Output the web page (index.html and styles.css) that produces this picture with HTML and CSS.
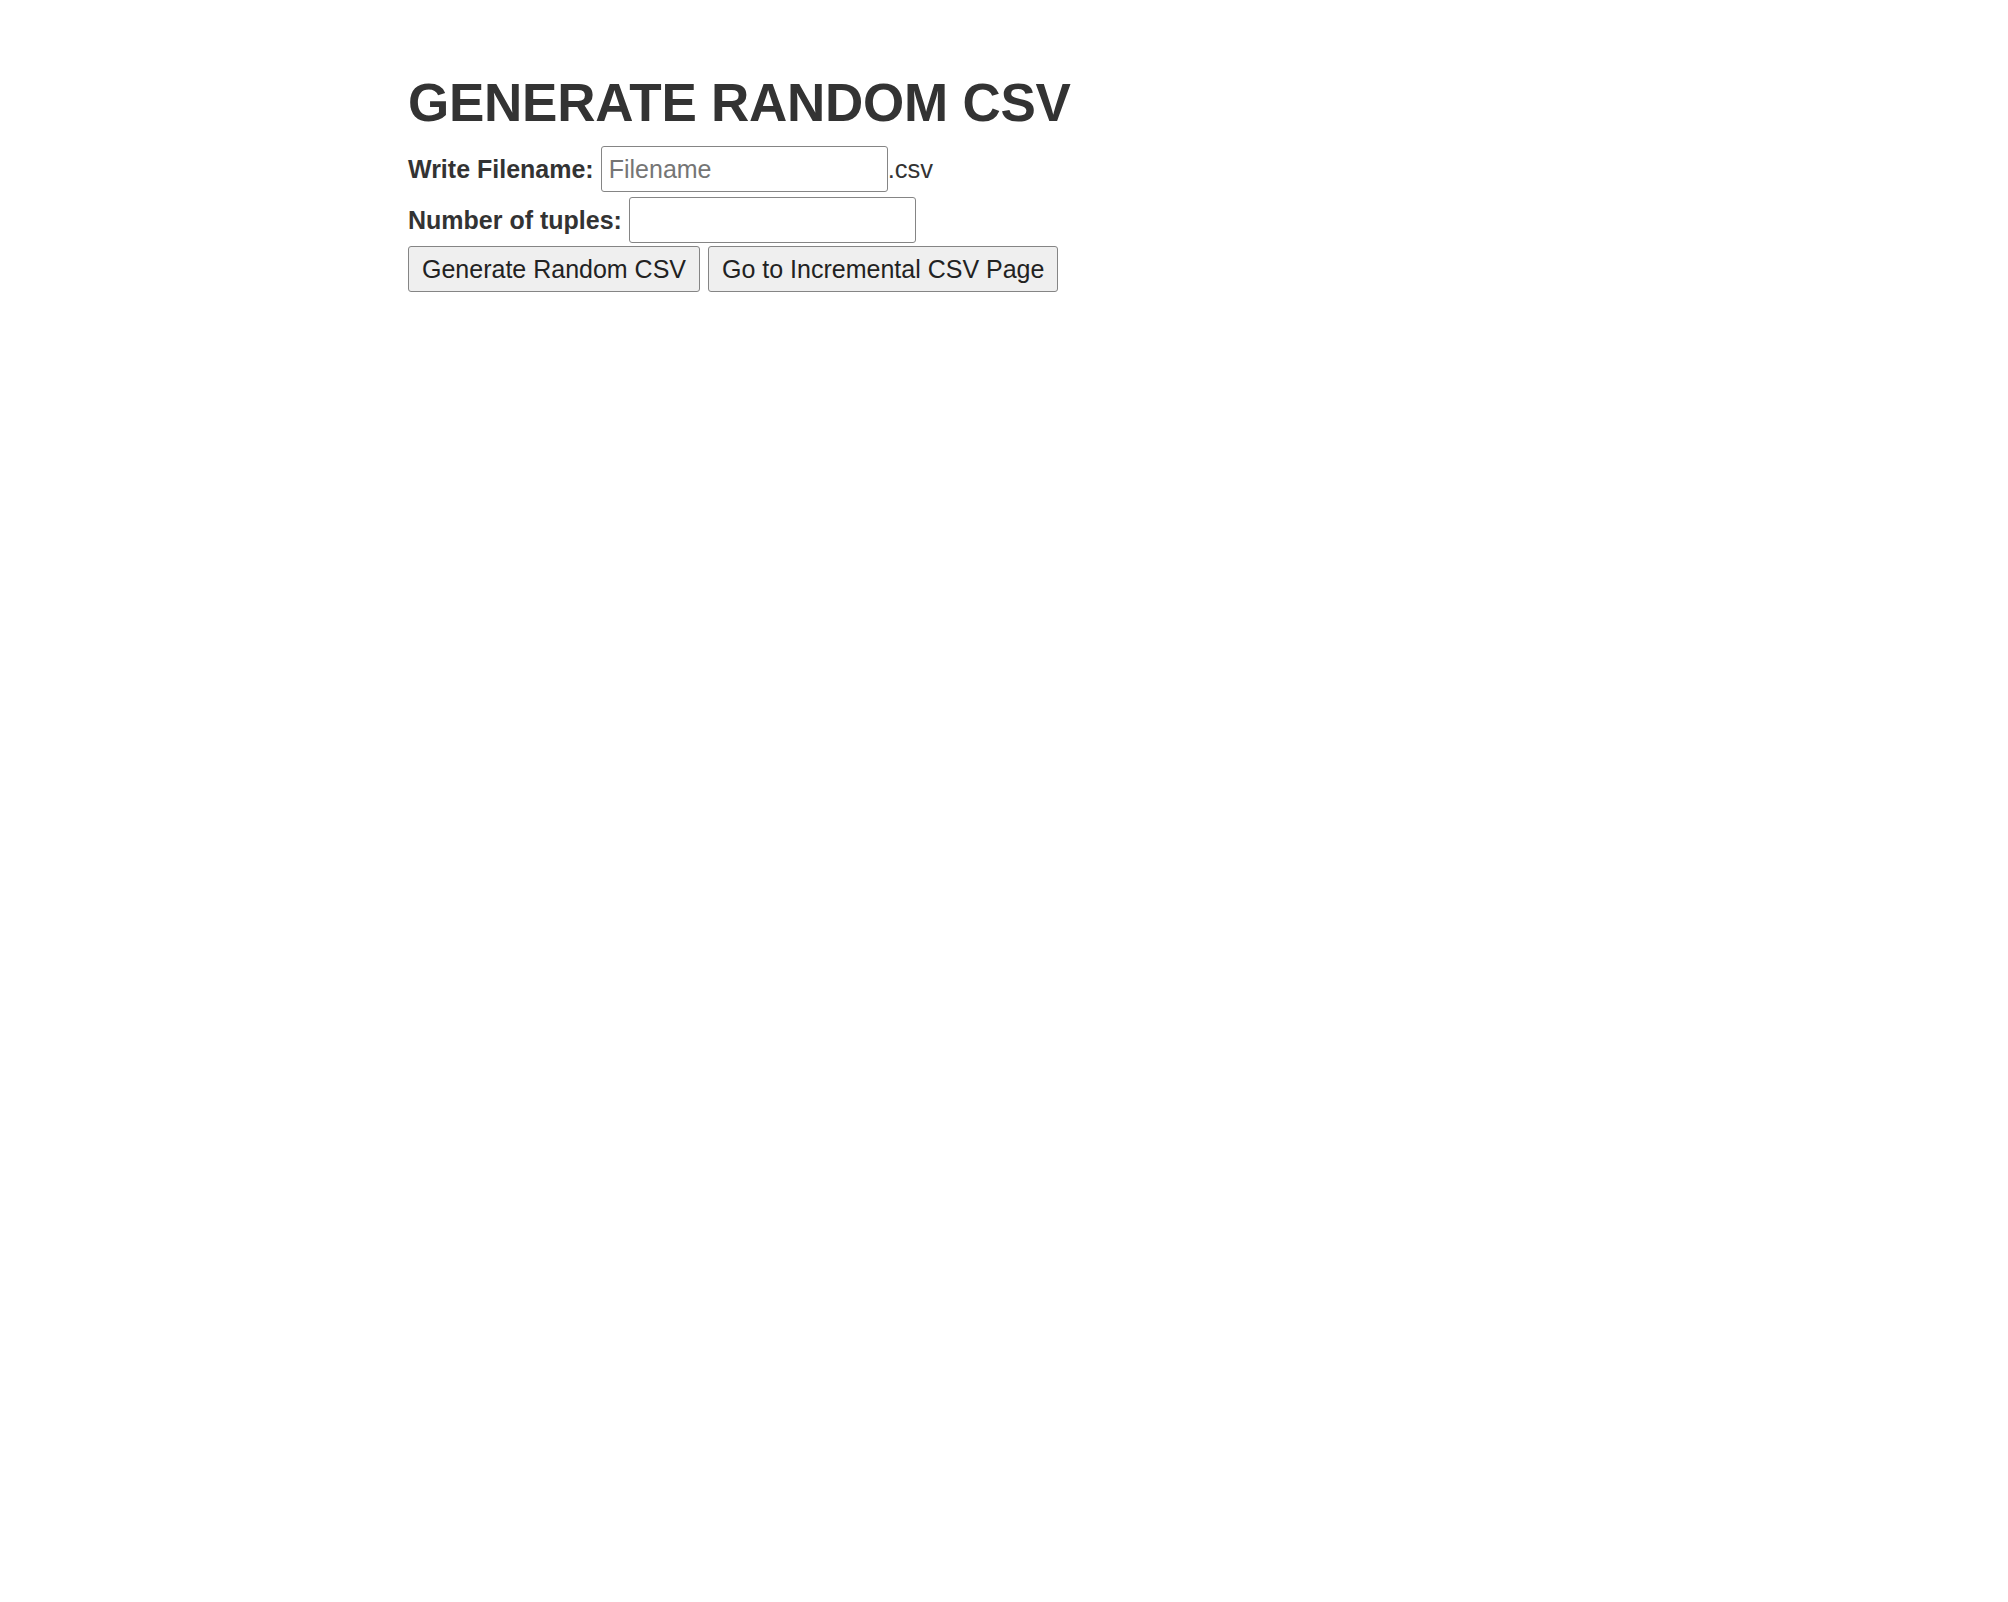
FILE: index.html
```html
<!DOCTYPE html>
<html lang="en">
<head>
<meta charset="utf-8">
<title>Generate Random CSV</title>
<link rel="stylesheet" href="styles.css">
</head>
<body>
<main class="page">
  <h1 class="title">GENERATE RANDOM CSV</h1>
  <form class="form" onsubmit="return false;">
    <div class="row">
      <label class="label" for="fname">Write Filename:</label>
      <input class="field" id="fname" type="text" placeholder="Filename"><span class="ext">.csv</span>
    </div>
    <div class="row row-second">
      <label class="label" for="tuples">Number of tuples:</label>
      <input class="field" id="tuples" type="text">
    </div>
    <div class="row row-buttons">
      <button class="btn" type="submit">Generate Random CSV</button>
      <button class="btn" type="button">Go to Incremental CSV Page</button>
    </div>
  </form>
</main>
</body>
</html>
```
FILE: styles.css
```css
html, body {
  margin: 0;
  padding: 0;
  background: #ffffff;
}
body {
  font-family: "Liberation Sans", Arial, Helvetica, sans-serif;
  color: #333333;
}
.page {
  padding: 74px 0 0 408px;
}
.title {
  margin: 0 0 14px 0;
  font-size: 53px;
  line-height: 1.1;
  font-weight: 700;
  letter-spacing: -0.25px;
  color: #333333;
}
.form {
  margin: 0;
}
.row {
  display: flex;
  align-items: baseline;
  height: 46px;
}
.row-second {
  margin-top: 5px;
}
.row-buttons {
  margin-top: 3px;
  gap: 8px;
  align-items: stretch;
}
.label {
  font-size: 25px;
  font-weight: 700;
  margin-right: 7px;
}
.field {
  box-sizing: border-box;
  width: 287px;
  height: 46px;
  margin: 0;
  padding: 0 7px;
  border: 1px solid #858585;
  border-radius: 3px;
  font-family: "Liberation Sans", Arial, Helvetica, sans-serif;
  font-size: 25px;
  color: #333333;
  background: #ffffff;
}
.field::placeholder {
  color: #757575;
}
.ext {
  font-size: 25.5px;
}
.btn {
  box-sizing: border-box;
  height: 46px;
  margin: 0;
  padding: 0 13px;
  border: 1px solid #858585;
  border-radius: 3px;
  background: #efefef;
  font-family: "Liberation Sans", Arial, Helvetica, sans-serif;
  font-size: 25px;
  color: #222222;
}
```
